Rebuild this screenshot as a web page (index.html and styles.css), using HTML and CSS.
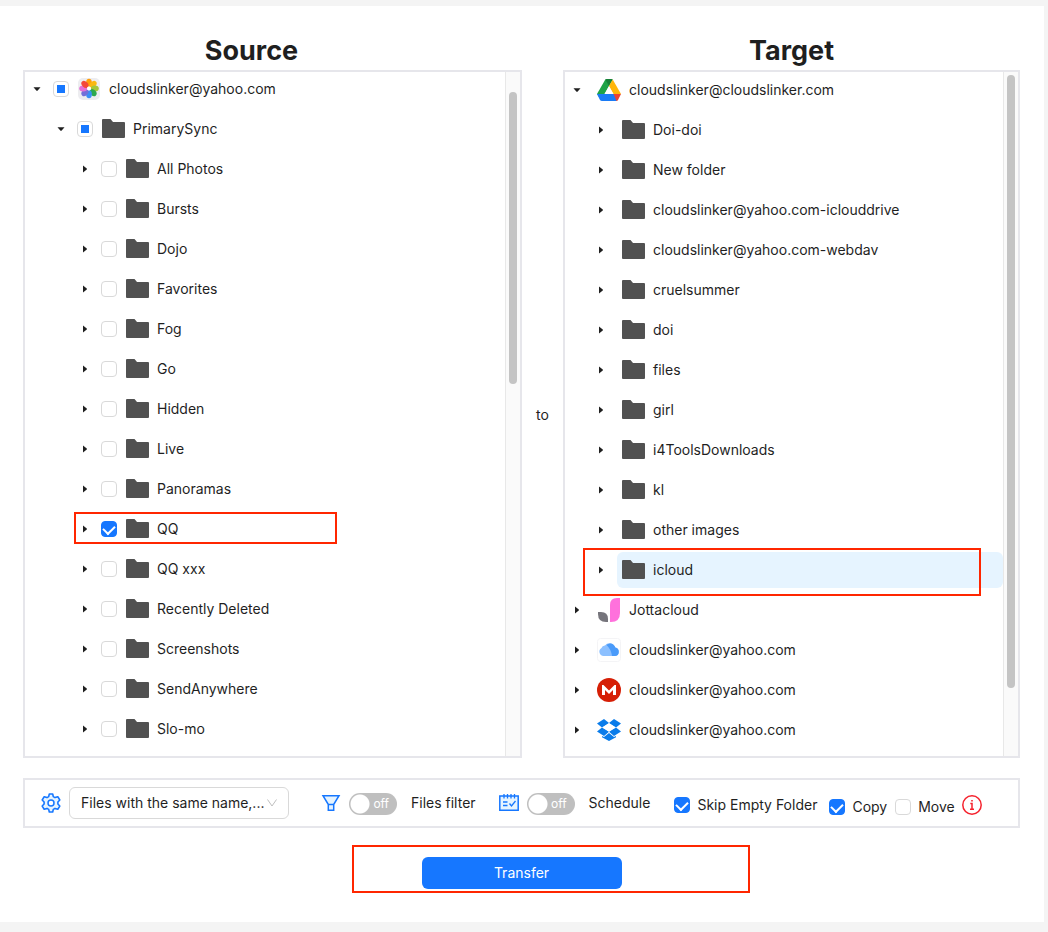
FILE: index.html
```html
<!DOCTYPE html>
<html lang="en">

<head>
    <meta charset="UTF-8">
    <meta name="viewport" content="width=device-width, initial-scale=1.0">
    <title>Transfer</title>
    <link rel="stylesheet" href="styles.css">
</head>

<body>

    <!-- shared icons -->
    <svg class="sprite" width="0" height="0">
        <symbol id="folder" viewBox="0 0 24 24">
            <path fill="#515151" d="M1 3Q1 2 2 2H9.500L12 5H23Q24 5 24 6V20Q24 21 23 21H2Q1 21 1 20Z" />
        </symbol>
        <symbol id="caret-down" viewBox="0 0 10 10">
            <path fill="#1f1f1f" d="M1.500 3.200H8.500L5.500 6.800H4.500Z" />
        </symbol>
        <symbol id="caret-right" viewBox="0 0 10 10">
            <path fill="#1f1f1f" d="M3 1.500V8.500L6.800 5.500V4.500Z" />
        </symbol>
    </svg>

    <main class="page">
        <div class="trees">
            <section class="side source">
                <h1>Source</h1>
                <div class="panel">
                    <ul class="tree">
                        <li>
                            <div class="row">
                                <button class="caret" aria-label="Collapse"><svg><use href="#caret-down" /></svg></button>
                                <input type="checkbox" class="check partial" id="s0">
                                <label class="node" for="s0">
                                    <svg class="icon" viewBox="0 0 24 24">
                                        <rect x="1" y="1" width="22" height="22" rx="5" fill="#ededf0" />
                                        <g transform="translate(12 11.500)">
                                            <ellipse cy="-5.800" rx="2.900" ry="4" fill="#ff9d0a" />
                                            <ellipse cy="-5.800" rx="2.900" ry="4" fill="#fbb80f" transform="rotate(45)" />
                                            <ellipse cy="-5.800" rx="2.900" ry="4" fill="#a5c639" transform="rotate(90)" />
                                            <ellipse cy="-5.800" rx="2.900" ry="4" fill="#2ca84f" transform="rotate(135)" />
                                            <ellipse cy="-5.800" rx="2.900" ry="4" fill="#3b8ff5" transform="rotate(180)" />
                                            <ellipse cy="-5.800" rx="2.900" ry="4" fill="#7470d8" transform="rotate(225)" />
                                            <ellipse cy="-5.800" rx="2.900" ry="4" fill="#e56fd5" transform="rotate(270)" />
                                            <ellipse cy="-5.800" rx="2.900" ry="4" fill="#f4483a" transform="rotate(315)" />
                                            <circle r="2" fill="#fff" />
                                        </g>
                                    </svg>
                                    cloudslinker@yahoo.com
                                </label>
                            </div>
                            <ul>
                                <li>
                                    <div class="row">
                                        <button class="caret" aria-label="Collapse"><svg><use href="#caret-down" /></svg></button>
                                        <input type="checkbox" class="check partial" id="s1">
                                        <label class="node" for="s1"><svg class="icon"><use href="#folder" /></svg>PrimarySync</label>
                                    </div>
                                    <ul>
                                        <li>
                                            <div class="row">
                                                <button class="caret" aria-label="Expand"><svg><use href="#caret-right" /></svg></button>
                                                <input type="checkbox" class="check" id="s2">
                                                <label class="node" for="s2"><svg class="icon"><use href="#folder" /></svg>All Photos</label>
                                            </div>
                                        </li>
                                        <li>
                                            <div class="row">
                                                <button class="caret" aria-label="Expand"><svg><use href="#caret-right" /></svg></button>
                                                <input type="checkbox" class="check" id="s3">
                                                <label class="node" for="s3"><svg class="icon"><use href="#folder" /></svg>Bursts</label>
                                            </div>
                                        </li>
                                        <li>
                                            <div class="row">
                                                <button class="caret" aria-label="Expand"><svg><use href="#caret-right" /></svg></button>
                                                <input type="checkbox" class="check" id="s4">
                                                <label class="node" for="s4"><svg class="icon"><use href="#folder" /></svg>Dojo</label>
                                            </div>
                                        </li>
                                        <li>
                                            <div class="row">
                                                <button class="caret" aria-label="Expand"><svg><use href="#caret-right" /></svg></button>
                                                <input type="checkbox" class="check" id="s5">
                                                <label class="node" for="s5"><svg class="icon"><use href="#folder" /></svg>Favorites</label>
                                            </div>
                                        </li>
                                        <li>
                                            <div class="row">
                                                <button class="caret" aria-label="Expand"><svg><use href="#caret-right" /></svg></button>
                                                <input type="checkbox" class="check" id="s6">
                                                <label class="node" for="s6"><svg class="icon"><use href="#folder" /></svg>Fog</label>
                                            </div>
                                        </li>
                                        <li>
                                            <div class="row">
                                                <button class="caret" aria-label="Expand"><svg><use href="#caret-right" /></svg></button>
                                                <input type="checkbox" class="check" id="s7">
                                                <label class="node" for="s7"><svg class="icon"><use href="#folder" /></svg>Go</label>
                                            </div>
                                        </li>
                                        <li>
                                            <div class="row">
                                                <button class="caret" aria-label="Expand"><svg><use href="#caret-right" /></svg></button>
                                                <input type="checkbox" class="check" id="s8">
                                                <label class="node" for="s8"><svg class="icon"><use href="#folder" /></svg>Hidden</label>
                                            </div>
                                        </li>
                                        <li>
                                            <div class="row">
                                                <button class="caret" aria-label="Expand"><svg><use href="#caret-right" /></svg></button>
                                                <input type="checkbox" class="check" id="s9">
                                                <label class="node" for="s9"><svg class="icon"><use href="#folder" /></svg>Live</label>
                                            </div>
                                        </li>
                                        <li>
                                            <div class="row">
                                                <button class="caret" aria-label="Expand"><svg><use href="#caret-right" /></svg></button>
                                                <input type="checkbox" class="check" id="s10">
                                                <label class="node" for="s10"><svg class="icon"><use href="#folder" /></svg>Panoramas</label>
                                            </div>
                                        </li>
                                        <li>
                                            <div class="row">
                                                <button class="caret" aria-label="Expand"><svg><use href="#caret-right" /></svg></button>
                                                <input type="checkbox" class="check" id="s11" checked>
                                                <label class="node" for="s11"><svg class="icon"><use href="#folder" /></svg>QQ</label>
                                                <span class="mark mark-source"></span>
                                            </div>
                                        </li>
                                        <li>
                                            <div class="row">
                                                <button class="caret" aria-label="Expand"><svg><use href="#caret-right" /></svg></button>
                                                <input type="checkbox" class="check" id="s12">
                                                <label class="node" for="s12"><svg class="icon"><use href="#folder" /></svg>QQ xxx</label>
                                            </div>
                                        </li>
                                        <li>
                                            <div class="row">
                                                <button class="caret" aria-label="Expand"><svg><use href="#caret-right" /></svg></button>
                                                <input type="checkbox" class="check" id="s13">
                                                <label class="node" for="s13"><svg class="icon"><use href="#folder" /></svg>Recently Deleted</label>
                                            </div>
                                        </li>
                                        <li>
                                            <div class="row">
                                                <button class="caret" aria-label="Expand"><svg><use href="#caret-right" /></svg></button>
                                                <input type="checkbox" class="check" id="s14">
                                                <label class="node" for="s14"><svg class="icon"><use href="#folder" /></svg>Screenshots</label>
                                            </div>
                                        </li>
                                        <li>
                                            <div class="row">
                                                <button class="caret" aria-label="Expand"><svg><use href="#caret-right" /></svg></button>
                                                <input type="checkbox" class="check" id="s15">
                                                <label class="node" for="s15"><svg class="icon"><use href="#folder" /></svg>SendAnywhere</label>
                                            </div>
                                        </li>
                                        <li>
                                            <div class="row">
                                                <button class="caret" aria-label="Expand"><svg><use href="#caret-right" /></svg></button>
                                                <input type="checkbox" class="check" id="s16">
                                                <label class="node" for="s16"><svg class="icon"><use href="#folder" /></svg>Slo-mo</label>
                                            </div>
                                        </li>
                                    </ul>
                                </li>
                            </ul>
                        </li>
                    </ul>
                    <div class="scrollbar"><div class="thumb"></div></div>
                </div>
            </section>

            <div class="to">to</div>

            <section class="side target">
                <h1>Target</h1>
                <div class="panel">
                    <ul class="tree">
                        <li>
                            <div class="row">
                                <button class="caret" aria-label="Collapse"><svg><use href="#caret-down" /></svg></button>
                                <a href="#" class="node">
                                    <svg class="icon" viewBox="0 0 24 24">
                                        <path fill="#1fa347" d="M8.300 1.500Q9 1 10 1H14Q15 1 15.700 1.500L4 22 0 16Z" />
                                        <path fill="#188038" d="M8.300 1.500Q9 1 10 1H14Q15 1 15.700 1.500L12 8Z" />
                                        <path fill="#ffb60a" d="M15.700 1.500 24 16H16.500L12 8Z" />
                                        <path fill="#1a7bf5" d="M0 16H18L20 23H5Q3.500 23 3 22Z" />
                                        <path fill="#ea4335" d="M16.500 16H24L21 22Q20.500 23 19.500 23Z" />
                                        <path fill="#fff" d="M12 8.200 16.300 16H7.700Z" />
                                    </svg>
                                    cloudslinker@cloudslinker.com
                                </a>
                            </div>
                            <ul>
                                <li>
                                    <div class="row">
                                        <button class="caret" aria-label="Expand"><svg><use href="#caret-right" /></svg></button>
                                        <a href="#" class="node"><svg class="icon"><use href="#folder" /></svg>Doi-doi</a>
                                    </div>
                                </li>
                                <li>
                                    <div class="row">
                                        <button class="caret" aria-label="Expand"><svg><use href="#caret-right" /></svg></button>
                                        <a href="#" class="node"><svg class="icon"><use href="#folder" /></svg>New folder</a>
                                    </div>
                                </li>
                                <li>
                                    <div class="row">
                                        <button class="caret" aria-label="Expand"><svg><use href="#caret-right" /></svg></button>
                                        <a href="#" class="node"><svg class="icon"><use href="#folder" /></svg>cloudslinker@yahoo.com-iclouddrive</a>
                                    </div>
                                </li>
                                <li>
                                    <div class="row">
                                        <button class="caret" aria-label="Expand"><svg><use href="#caret-right" /></svg></button>
                                        <a href="#" class="node"><svg class="icon"><use href="#folder" /></svg>cloudslinker@yahoo.com-webdav</a>
                                    </div>
                                </li>
                                <li>
                                    <div class="row">
                                        <button class="caret" aria-label="Expand"><svg><use href="#caret-right" /></svg></button>
                                        <a href="#" class="node"><svg class="icon"><use href="#folder" /></svg>cruelsummer</a>
                                    </div>
                                </li>
                                <li>
                                    <div class="row">
                                        <button class="caret" aria-label="Expand"><svg><use href="#caret-right" /></svg></button>
                                        <a href="#" class="node"><svg class="icon"><use href="#folder" /></svg>doi</a>
                                    </div>
                                </li>
                                <li>
                                    <div class="row">
                                        <button class="caret" aria-label="Expand"><svg><use href="#caret-right" /></svg></button>
                                        <a href="#" class="node"><svg class="icon"><use href="#folder" /></svg>files</a>
                                    </div>
                                </li>
                                <li>
                                    <div class="row">
                                        <button class="caret" aria-label="Expand"><svg><use href="#caret-right" /></svg></button>
                                        <a href="#" class="node"><svg class="icon"><use href="#folder" /></svg>girl</a>
                                    </div>
                                </li>
                                <li>
                                    <div class="row">
                                        <button class="caret" aria-label="Expand"><svg><use href="#caret-right" /></svg></button>
                                        <a href="#" class="node"><svg class="icon"><use href="#folder" /></svg>i4ToolsDownloads</a>
                                    </div>
                                </li>
                                <li>
                                    <div class="row">
                                        <button class="caret" aria-label="Expand"><svg><use href="#caret-right" /></svg></button>
                                        <a href="#" class="node"><svg class="icon"><use href="#folder" /></svg>kl</a>
                                    </div>
                                </li>
                                <li>
                                    <div class="row">
                                        <button class="caret" aria-label="Expand"><svg><use href="#caret-right" /></svg></button>
                                        <a href="#" class="node"><svg class="icon"><use href="#folder" /></svg>other images</a>
                                    </div>
                                </li>
                                <li>
                                    <div class="row">
                                        <button class="caret" aria-label="Expand"><svg><use href="#caret-right" /></svg></button>
                                        <a href="#" class="node selected"><svg class="icon"><use href="#folder" /></svg>icloud</a>
                                        <span class="mark mark-target"></span>
                                    </div>
                                </li>
                            </ul>
                        </li>
                        <li>
                            <div class="row">
                                <button class="caret" aria-label="Expand"><svg><use href="#caret-right" /></svg></button>
                                <a href="#" class="node">
                                    <svg class="icon" viewBox="0 0 24 24">
                                        <path fill="#ff71dc" d="M13 24V7Q13 0 20 0H23V15Q23 24 14 24Z" />
                                        <path fill="#76757c" d="M1 14H4Q11 14 11 21V24H9Q1 24 1 16Z" />
                                    </svg>
                                    Jottacloud
                                </a>
                            </div>
                        </li>
                        <li>
                            <div class="row">
                                <button class="caret" aria-label="Expand"><svg><use href="#caret-right" /></svg></button>
                                <a href="#" class="node">
                                    <svg class="icon" viewBox="0 0 24 24">
                                        <rect x="0.500" y="0.500" width="23" height="23" rx="3" fill="#fff" stroke="#f4f4f6" />
                                        <path fill="#8cc0ff" d="M6.500 18A4.300 4.300 0 0 1 4.500 10 3.500 3.500 0 0 1 8 7.500 5.600 5.600 0 0 1 18 9.500 4.300 4.300 0 0 1 18 18Z" />
                                        <path fill="#4a9bfa" d="M9.500 7A5.400 5.400 0 0 1 18.300 9.500 4.300 4.300 0 0 1 18 18H15Q14 11 9.500 7Z" />
                                    </svg>
                                    cloudslinker@yahoo.com
                                </a>
                            </div>
                        </li>
                        <li>
                            <div class="row">
                                <button class="caret" aria-label="Expand"><svg><use href="#caret-right" /></svg></button>
                                <a href="#" class="node">
                                    <svg class="icon" viewBox="0 0 24 24">
                                        <circle cx="12" cy="12" r="12" fill="#d61f06" />
                                        <path fill="#fff" d="M5 17V7H6.500L12 12.500 17.500 7H19V17H16V12L12 16 8 12V17Z" />
                                    </svg>
                                    cloudslinker@yahoo.com
                                </a>
                            </div>
                        </li>
                        <li>
                            <div class="row">
                                <button class="caret" aria-label="Expand"><svg><use href="#caret-right" /></svg></button>
                                <a href="#" class="node">
                                    <svg class="icon" viewBox="0 0 24 24">
                                        <g fill="#0a7cea">
                                            <path d="M7 1 12 5 5 9.500 0 5.500Z" />
                                            <path d="M17 1 24 5.500 19 9.500 12 5Z" />
                                            <path d="M5 9.500 12 13.800 7 18 0 13.500Z" />
                                            <path d="M19 9.500 24 13.500 17 18 12 13.800Z" />
                                            <path d="M12 15 17 19 19 18V19.200L12 23 5 19.200V18L7 19Z" />
                                        </g>
                                        <path fill="#fff" d="M12 5.200 18.500 9.500 12 13.600 5.500 9.500Z" />
                                    </svg>
                                    cloudslinker@yahoo.com
                                </a>
                            </div>
                        </li>
                    </ul>
                    <div class="scrollbar"><div class="thumb"></div></div>
                </div>
            </section>
        </div>

        <div class="options">
            <svg class="gear" viewBox="0 0 20 20">
                <path fill="#e6f4ff" stroke="#1677ff" stroke-width="1.600" stroke-linejoin="round" d="M8.300 1H11.700L12.300 3.600 14 4.600 16.800 3.700 18.800 7 16.900 9V11L18.800 13 16.800 16.300 14 15.400 12.300 16.400 11.700 19H8.300L7.700 16.400 6 15.400 3.200 16.300 1.200 13 3.100 11V9L1.200 7 3.200 3.700 6 4.600 7.700 3.600Z" />
                <circle cx="10" cy="10" r="3" fill="#fff" stroke="#1677ff" stroke-width="1.500" />
            </svg>
            <div class="select">
                <select aria-label="Files with the same name">
                    <option>Files with the same name,...</option>
                </select>
                <svg viewBox="0 0 10 10"><path fill="none" stroke="#bfbfbf" d="M0.500 1.500 5 8 9.500 1.500" /></svg>
            </div>

            <div class="option filter">
                <svg class="tool" viewBox="0 0 20 20">
                    <path fill="#e6f4ff" stroke="#1677ff" stroke-width="1.500" d="M2 2.700H18L12.700 11.500H7.300ZM7.300 11.500H12.700V17.300H7.300Z" />
                </svg>
                <label class="switch"><input type="checkbox" id="filter"><span>off</span></label>
                <label for="filter">Files filter</label>
            </div>

            <div class="option schedule">
                <svg class="tool" viewBox="0 0 20 20">
                    <path fill="#e6f4ff" stroke="#1677ff" stroke-width="1.500" d="M0.800 3H19.200V17.200H0.800Z" />
                    <path fill="none" stroke="#1677ff" stroke-width="1.300" d="M5 1V5.500M8.500 1V5.500M12 1V5.500M15.500 1V5.500M4 9H8.500M4 12.500H8.500M10.500 10.500 12.500 13 16.500 8" />
                </svg>
                <label class="switch"><input type="checkbox" id="schedule"><span>off</span></label>
                <label for="schedule">Schedule</label>
            </div>

            <div class="choice skip">
                <input type="checkbox" class="check" id="skip" checked>
                <label for="skip">Skip Empty Folder</label>
            </div>
            <div class="modes">
                <div class="choice">
                    <input type="checkbox" class="check" id="copy" checked>
                    <label for="copy">Copy</label>
                </div>
                <div class="choice">
                    <input type="checkbox" class="check" id="move">
                    <label for="move">Move</label>
                </div>
            </div>
            <svg class="info" viewBox="0 0 20 20">
                <circle cx="10" cy="10" r="9.200" fill="#fff" stroke="#f5222d" stroke-width="1.500" />
                <path fill="none" stroke="#f5222d" stroke-width="1.500" d="M8.300 8.500H10V14M8 14.200H12M9.200 5.800H10.800" />
            </svg>
        </div>

        <div class="actions">
            <button class="transfer">Transfer</button>
            <span class="mark mark-transfer"></span>
        </div>
    </main>

    <script>
        document.querySelectorAll(".partial").forEach(box => {
            box.indeterminate = true;
        });
    </script>

</body>

</html>
```
FILE: styles.css
```css
* {
    box-sizing: border-box;
}

body {
    margin: 0;
    padding: 6px 4px 10px 0;
    background-color: #f4f4f4;
    color: #1f1f1f;
    font-family: Inter, "Liberation Sans", sans-serif;
    font-size: 14px;
    line-height: 22px;
}

button,
select {
    font: inherit;
    color: inherit;
}

ul {
    list-style: none;
    margin: 0;
    padding: 0;
}

.sprite {
    position: absolute;
}

.page {
    background-color: #fff;
    padding: 26px 24px 33px 23px;
}

/* trees */

.trees {
    display: grid;
    grid-template-columns: 499fr 41px 457fr;
}

h1 {
    margin: 0;
    font-size: 27px;
    line-height: 38px;
    font-weight: 700;
    text-align: center;
}

.source h1 {
    padding-right: 42px;
}

.panel {
    display: flex;
    border: 2px solid #e6e6eb;
}

.tree {
    flex: 1;
    min-width: 0;
    padding-bottom: 4px;
}

.tree ul {
    padding-left: 24px;
}

.row {
    position: relative;
    display: flex;
    align-items: center;
    height: 36px;
    margin-bottom: 4px;
}

.source .row {
    height: 34px;
    margin-bottom: 6px;
}

.caret {
    display: flex;
    align-items: center;
    justify-content: center;
    width: 24px;
    height: 24px;
    margin-right: 4px;
    padding: 0;
    border: none;
    background: none;
    cursor: pointer;
}

.caret svg {
    width: 10px;
    height: 10px;
}

.node {
    flex: 1;
    display: flex;
    align-items: center;
    gap: 8px;
    height: 100%;
    color: inherit;
    text-decoration: none;
    white-space: nowrap;
    cursor: pointer;
}

.target .node {
    padding-left: 4px;
    border-radius: 6px;
}

.node.selected {
    background-color: #e6f4ff;
}

.icon {
    width: 24px;
    height: 24px;
    flex-shrink: 0;
}

.check {
    appearance: none;
    flex-shrink: 0;
    width: 16px;
    height: 16px;
    margin: 0 8px 0 0;
    border: 1px solid #d9d9d9;
    border-radius: 4px;
    background: #fff center no-repeat;
    cursor: pointer;
}

.check:indeterminate {
    background-image: linear-gradient(#1677ff, #1677ff);
    background-size: 8px 8px;
}

.check:checked {
    display: grid;
    place-items: center;
    border-color: #1677ff;
    background-color: #1677ff;
}

.check:checked::after {
    content: "";
    width: 6px;
    height: 9px;
    border: solid #fff;
    border-width: 0 2px 2px 0;
    transform: translateY(-1px) rotate(45deg);
}

.scrollbar {
    width: 15px;
    border-left: 1px solid #e8e8e8;
    background-color: #fafafa;
    padding: 3px 3px 0;
}

.source .scrollbar {
    padding-top: 20px;
}

.thumb {
    height: 90%;
    border-radius: 4px;
    background-color: #c4c4c4;
}

.source .thumb {
    height: 44%;
}

.to {
    align-self: center;
    padding-top: 40px;
    text-align: center;
}

/* red frames */

.mark {
    position: absolute;
    border: 2px solid #ff2600;
    pointer-events: none;
}

.mark-source {
    top: 0;
    left: 1px;
    width: 263px;
    height: 32px;
}

.mark-target {
    top: -4px;
    left: -6px;
    right: 22px;
    height: 48px;
}

.mark-transfer {
    top: -12px;
    width: 398px;
    height: 48px;
    margin-left: 58px;
}

/* options */

.options {
    display: flex;
    align-items: center;
    height: 50px;
    margin-top: 20px;
    padding: 0 16px;
    border: 2px solid #e6e6eb;
    white-space: nowrap;
}

.gear,
.tool,
.info {
    width: 20px;
    height: 20px;
    flex-shrink: 0;
}

.select {
    position: relative;
    width: 220px;
    margin-left: 8px;
}

.select select {
    appearance: none;
    width: 100%;
    height: 32px;
    padding: 0 18px 0 11px;
    border: 1px solid #d9d9d9;
    border-radius: 6px;
    background-color: #fff;
}

.select svg {
    position: absolute;
    top: 11px;
    right: 12px;
    width: 10px;
    height: 10px;
    pointer-events: none;
}

.option {
    display: flex;
    align-items: center;
    margin-left: 32px;
}

.schedule {
    margin-left: 23px;
}

.switch {
    position: relative;
    margin: 2px 14px 0 8px;
}

.switch input {
    appearance: none;
    display: block;
    width: 48px;
    height: 22px;
    margin: 0;
    border-radius: 11px;
    background: #bfbfbf radial-gradient(circle at 11px 11px, #fff 9px, transparent 10px);
    cursor: pointer;
}

.switch span {
    position: absolute;
    top: 0;
    right: 8px;
    color: #fff;
    font-size: 12px;
}

.choice {
    display: flex;
    align-items: center;
}

.skip {
    margin: 4px 0 0 24px;
}

.skip .check,
.modes .check {
    margin-right: 7px;
}

.modes {
    display: flex;
    gap: 8px;
    margin: 8px 7px 0 12px;
}

.info {
    margin-top: 4px;
}

/* transfer */

.actions {
    position: relative;
    display: flex;
    justify-content: center;
    margin-top: 29px;
}

.transfer {
    width: 200px;
    height: 32px;
    border: none;
    border-radius: 6px;
    background-color: #1677ff;
    color: #fff;
    cursor: pointer;
}
```
